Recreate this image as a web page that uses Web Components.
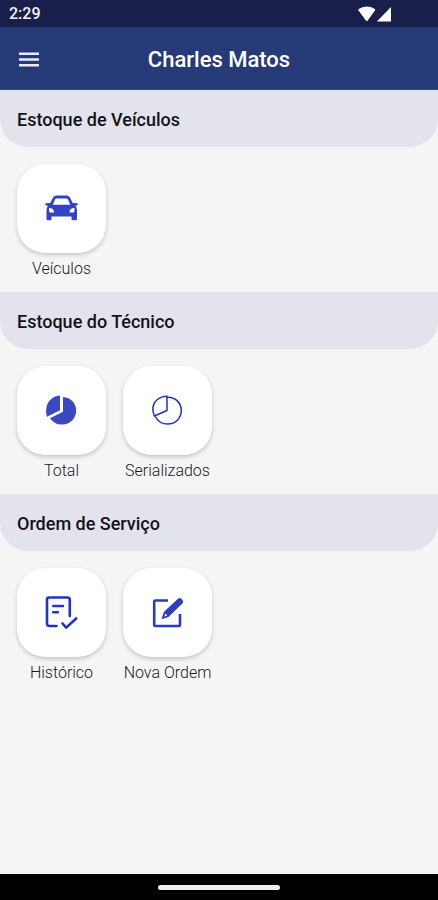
<!DOCTYPE html>
<html lang="pt-BR">
<head>
<meta charset="utf-8">
<meta name="viewport" content="width=device-width, initial-scale=1">
<title>Charles Matos</title>
<style>
html, body { margin: 0; }
body { font-family: Roboto, "Liberation Sans", sans-serif; background: #f5f5f5; }
</style>
</head>
<body>
<stock-app>
  <status-bar slot="top" time="2:29"></status-bar>
  <app-header slot="top">Charles Matos</app-header>
  <menu-section heading="Estoque de Veículos">
    <menu-tile icon="car">Veículos</menu-tile>
  </menu-section>
  <menu-section heading="Estoque do Técnico">
    <menu-tile icon="pie">Total</menu-tile>
    <menu-tile icon="pie-outline">Serializados</menu-tile>
  </menu-section>
  <menu-section heading="Ordem de Serviço">
    <menu-tile icon="history">Histórico</menu-tile>
    <menu-tile icon="edit">Nova Ordem</menu-tile>
  </menu-section>
  <gesture-bar slot="bottom"></gesture-bar>
</stock-app>
<script>
class Base extends HTMLElement {
  connectedCallback() {
    if (this.shadowRoot) return;
    this.attachShadow({ mode: 'open' }).innerHTML = this.view();
  }
}

customElements.define('stock-app', class extends Base {
  view() {
    return `<style>
      :host { display: flex; flex-direction: column; min-height: 100vh; background: #f5f5f5; }
      main { flex: 1; }
    </style>
    <slot name="top"></slot><main><slot></slot></main><slot name="bottom"></slot>`;
  }
});

customElements.define('status-bar', class extends Base {
  view() {
    return `<style>
      :host { display: flex; align-items: center; justify-content: space-between; box-sizing: border-box;
        height: 27px; padding: 1px 45px 0 9px; background: #191f4b; color: #f1f1f4; font-size: 16px; font-weight: 500; line-height: 20px; }
      svg { display: block; }
    </style>
    <span>${this.getAttribute('time')}</span>
    <svg width="36" height="18" viewBox="0 0 36 18" fill="#fff" aria-hidden="true">
      <path d="M1.500 4.800 C6 1.200 14 1.200 18 4.800 L9.800 16 Z" stroke="#fff" stroke-width="1" stroke-linejoin="round"/>
      <path d="M34 2 V16.500 H19.800 Z"/>
    </svg>`;
  }
});

customElements.define('app-header', class extends Base {
  view() {
    return `<style>
      :host { display: grid; grid-template-columns: 58px 1fr 58px; align-items: center; box-sizing: border-box;
        height: 63px; padding-top: 3px; background: #263a77; border-bottom: 1px solid #3b4878; color: #fff; }
      button { justify-self: center; padding: 8px; border: 0; background: none; color: #eceaf8; }
      svg { display: block; }
      h1 { margin: 0; font-size: 22px; font-weight: 500; line-height: 28px; text-align: center; white-space: nowrap; }
    </style>
    <button type="button" aria-label="Menu">
      <svg width="22" height="16" viewBox="0 0 22 16" fill="currentColor"><path d="M1 .5h20v2.600H1zM1 6.200h20v2.600H1zM1 11.900h20v2.600H1z"/></svg>
    </button>
    <h1><slot></slot></h1>`;
  }
});

customElements.define('menu-section', class extends Base {
  view() {
    return `<style>
      :host { display: block; }
      h2 { margin: 0; padding: 18px 17px 15px; border-radius: 0 0 28px 28px; background: #e3e3ee;
        color: #131318; font-size: 18px; font-weight: 500; line-height: 24px; }
      div { display: flex; flex-wrap: wrap; gap: 17px; padding: 17px 17px 13px; }
    </style>
    <h2>${this.getAttribute('heading')}</h2>
    <div><slot></slot></div>`;
  }
});

const icons = {
  car: `<path fill="#3344c2" fill-rule="evenodd" d="M10 7.500 Q11.200 5.500 13.500 5.500 H23.500 Q25.800 5.500 27 7.500 L29.700 13 L34.500 13.200 Q35.300 14.800 33.800 15.600 L32.500 15.800 Q34 17.500 34 20 V29 Q34 30.300 32.800 30.300 H29.700 Q28.500 30.300 28.500 29 V26.500 H8.500 V29 Q8.500 30.300 7.300 30.300 H4.700 Q3.500 30.300 3.500 29 V20 Q3.500 17.500 5 15.800 L3.200 15.600 Q1.700 14.800 2.500 13.200 L7.300 13 Z M13.500 8.600 Q12.500 8.600 12 9.600 L9.800 14.700 H27.200 L25 9.600 Q24.500 8.600 23.500 8.600 Z M6 18 V21 Q6 22.500 8 22.500 H11 Q11.200 18.200 6 18 Z M31.500 18 V21 Q31.500 22.500 29.500 22.500 H26.500 Q26.300 18.200 31.500 18 Z"/>`,
  pie: `<g fill="#3a49bd"><path d="M17 3.500 V18.200 L4 24.800 C2.500 20 2.800 13 6.500 8.800 C9.500 5.200 13 3.700 17 3.500 Z"/><path d="M20 5 C28 5.500 33.200 11.500 33.200 18.600 C33.200 26.600 27 32.600 19.200 32.600 C14 32.600 9.500 30 7 26.200 L20 19.800 Z"/></g>`,
  'pie-outline': `<g fill="none" stroke="#2434b3" stroke-width="1.500" stroke-linejoin="round"><path d="M18 4.200 V18.500 L5.300 24 C2.500 17 4 11.500 8 7.800 C11 5.200 14 4.200 18 4.200 Z"/><path d="M18 5.200 C27 4.800 32.300 11.600 32.300 18.600 C32.300 26.300 26.300 32 18.900 32 C13 32 8.500 29 6.200 24.500"/></g>`,
  history: `<g fill="none" stroke="#2434bb" stroke-width="2.600" stroke-linecap="round" stroke-linejoin="round"><path d="M13.500 32 H6.500 Q4 32 4 29.500 V5.500 Q4 3.500 6 3.500 H24.500 Q26.800 3.500 26.800 5.800 V22"/><path d="M10.300 12 H20 M10.300 18.300 H14.800"/><path d="M19.500 29.500 L23.200 33.600 L33.200 24.500"/></g>`,
  edit: `<path d="M19 6.500 H6.200 Q5.200 6.500 5.200 7.500 V31 Q5.200 32 6.200 32 H30 Q31 32 31 31 V20" fill="none" stroke="#2b3bbf" stroke-width="2.600"/><path fill="#3040b8" fill-rule="evenodd" d="M28.700 4.900 Q30.600 3.300 32.500 4.900 L33.500 5.900 Q35 7.600 33.400 9.400 L19.500 22.900 L12.400 25.300 L15 17.800 Z M16.600 19.500 L15.300 22.500 L18.200 21.500 Z"/>`
};

customElements.define('menu-tile', class extends Base {
  view() {
    return `<style>
      :host { display: block; width: 89px; }
      button { display: flex; flex-direction: column; align-items: center; gap: 6px; width: 100%; padding: 0;
        border: 0; background: none; color: #19191b; font: inherit; font-size: 16px; font-weight: 300; line-height: 20px; white-space: nowrap; }
      .card { display: grid; place-items: center; width: 100%; aspect-ratio: 1; border-radius: 28px;
        background: #fff; box-shadow: 0 2px 4px rgba(0, 0, 0, .2); }
      svg { display: block; }
    </style>
    <button type="button">
      <span class="card"><svg width="37" height="37" viewBox="0 0 37 37" aria-hidden="true">${icons[this.getAttribute('icon')]}</svg></span>
      <span><slot></slot></span>
    </button>`;
  }
});

customElements.define('gesture-bar', class extends Base {
  view() {
    return `<style>
      :host { display: grid; place-items: center; height: 26px; background: #000; }
      i { width: 122px; height: 5px; border-radius: 3px; background: #eee; }
    </style><i></i>`;
  }
});
</script>
</body>
</html>
